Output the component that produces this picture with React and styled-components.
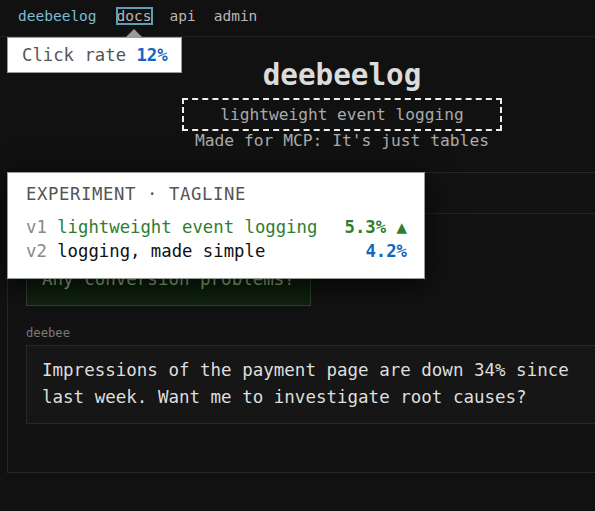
import React from 'react'
import styled, { createGlobalStyle } from 'styled-components'

const mono = '"DejaVu Sans Mono", "Liberation Mono", monospace'

const GlobalStyle = createGlobalStyle`
  html, body {
    margin: 0;
    background: #111;
    overflow: hidden;
  }
  body {
    font-family: ${mono};
    color: #ddd;
  }
`

const Page = styled.div`
  position: relative;
  width: 595px;
  height: 511px;
`

const Nav = styled.nav`
  box-sizing: border-box;
  display: flex;
  align-items: flex-start;
  gap: 18px;
  height: 37px;
  padding: 8px 18px 0;
  border-bottom: 1px solid #242424;
  font-size: 14.5px;
`

const NavLink = styled.span`
  color: ${p => (p.$brand ? '#7cbcd8' : '#b8b8b8')};
  outline: ${p => (p.$current ? '2px solid #5f9fb8' : 'none')};
  outline-offset: -1px;
  margin-left: ${p => (p.$current ? '2px' : '0')};
  line-height: 16px;
`

const Tooltip = styled.div`
  position: absolute;
  top: 37px;
  left: 7px;
  background: #fff;
  border: 1px solid #9a9a9a;
  padding: 7px 13px 7px 14px;
  font-size: 17.3px;
  line-height: 20px;
  color: #555;
  white-space: nowrap;

  &::before {
    content: '';
    position: absolute;
    top: -9px;
    left: 118px;
    border-left: 8px solid transparent;
    border-right: 8px solid transparent;
    border-bottom: 8px solid #9a9a9a;
  }
`

const Value = styled.b`
  color: ${p => p.$color || '#1565c0'};
  font-weight: bold;
`

const Main = styled.main`
  width: 670px;
  margin-left: 7px;
`

const Hero = styled.header`
  display: flex;
  flex-direction: column;
  align-items: center;
  padding-top: 20px;
`

const Title = styled.h1`
  margin: 0;
  font-size: 29.3px;
  line-height: 36px;
  font-weight: bold;
  color: #dcdcdc;
`

const Tagline = styled.div`
  margin-top: 5px;
  border: 2px dashed #eee;
  padding: 4px 36px;
  font-size: 16.2px;
  line-height: 21px;
  color: #aaa;
`

const Sub = styled.div`
  font-size: 16.3px;
  line-height: 20px;
  color: #aaa;
`

const Panel = styled.section`
  margin-top: 21px;
  border: 1px solid #272727;
  background: #121212;
`

const PanelHead = styled.div`
  height: 40px;
  border-bottom: 1px solid #242424;
`

const PanelBody = styled.div`
  display: flex;
  flex-direction: column;
  padding: 20px 18px 48px;
`

const Who = styled.div`
  font-size: 12.2px;
  line-height: 16px;
  color: #7a7a7a;
  margin-bottom: 4px;
`

const Bubble = styled.div`
  align-self: ${p => (p.$user ? 'flex-start' : 'stretch')};
  margin-bottom: ${p => (p.$user ? '19px' : '0')};
  padding: 11px 15px;
  font-size: 17.5px;
  line-height: 27.5px;
  color: ${p => (p.$user ? '#8cbf7c' : '#dedede')};
  background: ${p => (p.$user ? 'linear-gradient(#0d160d, #112410)' : '#161616')};
  border: 1px solid ${p => (p.$user ? '#2c462a' : '#282828')};
`

const Popup = styled.div`
  position: absolute;
  top: 172px;
  left: 7px;
  width: 381px;
  background: #fff;
  border: 1px solid #9a9a9a;
  padding: 11px 17px 15px 18px;
  box-shadow: 0 6px 28px rgba(0, 0, 0, 0.75);
  font-size: 17.3px;
`

const PopupTitle = styled.div`
  line-height: 20px;
  letter-spacing: 0.6px;
  color: #555;
  margin-bottom: 11px;
`

const Row = styled.div`
  display: flex;
  justify-content: space-between;
  line-height: 24px;
`

const Version = styled.span`
  color: #888;
  margin-right: 10.4px;
`

const Label = styled.span`
  color: ${p => p.$color || '#111'};
`

export default function App() {
  return (
    <Page>
      <GlobalStyle />
      <Nav>
        <NavLink $brand>deebeelog</NavLink>
        <NavLink $current>docs</NavLink>
        <NavLink>api</NavLink>
        <NavLink>admin</NavLink>
      </Nav>
      <Tooltip>
        Click rate <Value>12%</Value>
      </Tooltip>
      <Main>
        <Hero>
          <Title>deebeelog</Title>
          <Tagline>lightweight event logging</Tagline>
          <Sub>Made for MCP: It's just tables</Sub>
        </Hero>
        <Panel>
          <PanelHead />
          <PanelBody>
            <Who>you</Who>
            <Bubble $user>Any conversion problems?</Bubble>
            <Who>deebee</Who>
            <Bubble>
              Impressions of the payment page are down 34% since
              <br />
              last week. Want me to investigate root causes?
            </Bubble>
          </PanelBody>
        </Panel>
      </Main>
      <Popup>
        <PopupTitle>EXPERIMENT · TAGLINE</PopupTitle>
        <Row>
          <span>
            <Version>v1</Version>
            <Label $color="#2e7d32">lightweight event logging</Label>
          </span>
          <Value $color="#2e7d32">5.3% ▲</Value>
        </Row>
        <Row>
          <span>
            <Version>v2</Version>
            <Label>logging, made simple</Label>
          </span>
          <Value>4.2%</Value>
        </Row>
      </Popup>
    </Page>
  )
}
